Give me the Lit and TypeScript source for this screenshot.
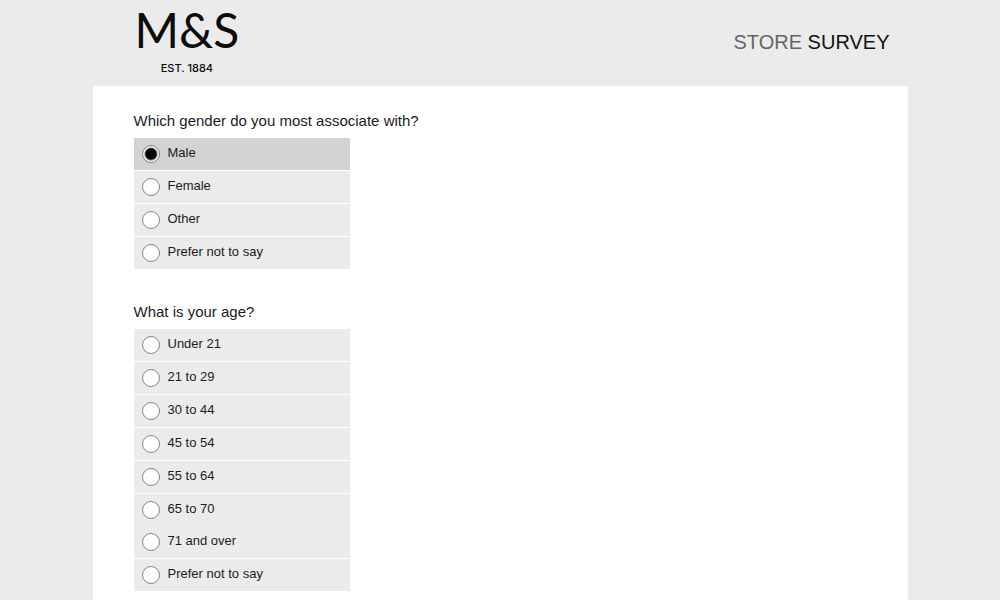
import { LitElement, html, css } from "lit";
import { customElement, property, state } from "lit/decorators.js";
import { classMap } from "lit/directives/class-map.js";

@customElement("survey-question")
class SurveyQuestion extends LitElement {
  @property() name = "";
  @property() heading = "";
  @property({ attribute: false }) options: string[] = [];
  /** Options drawn without a divider above them. */
  @property({ attribute: false }) joined: string[] = [];
  @property() value = "";

  static styles = css`
    :host {
      display: block;
    }
    .question {
      margin: 0;
      padding: 0;
      border: 0;
      min-width: 0;
    }
    .heading {
      padding: 0;
      margin-bottom: 7px;
      font-size: 15px;
      line-height: 20px;
    }
    .options {
      width: 216px;
      max-width: 100%;
    }
    .option {
      display: flex;
      align-items: center;
      gap: 8px;
      height: 30px;
      padding: 0 8px 2px;
      background: #ebebeb;
      font-size: 13px;
      line-height: 16px;
      cursor: pointer;
    }
    .option + .option {
      border-top: 1px solid #fff;
    }
    .option + .joined {
      border-top: 0;
    }
    .selected {
      background: #d3d3d3;
    }
    .radio {
      appearance: none;
      box-sizing: border-box;
      flex: none;
      width: 18px;
      height: 18px;
      margin: 2px 0 0;
      border: 1px solid #858585;
      border-radius: 50%;
      background: #fff;
      cursor: pointer;
    }
    .radio:checked {
      background: radial-gradient(circle, #000 5px, #f4f4f4 7px);
    }
  `;

  private choose(option: string) {
    this.value = option;
  }

  render() {
    return html`
      <fieldset class="question">
        <legend class="heading">${this.heading}</legend>
        <div class="options">
          ${this.options.map(
            (option) => html`
              <label
                class=${classMap({
                  option: true,
                  selected: option === this.value,
                  joined: this.joined.includes(option),
                })}
              >
                <input
                  class="radio"
                  type="radio"
                  name=${this.name}
                  .value=${option}
                  .checked=${option === this.value}
                  @change=${() => this.choose(option)}
                />
                <span class="text">${option}</span>
              </label>
            `
          )}
        </div>
      </fieldset>
    `;
  }
}

@customElement("app-root")
class AppRoot extends LitElement {
  @state() private genders = ["Male", "Female", "Other", "Prefer not to say"];
  @state() private ages = [
    "Under 21",
    "21 to 29",
    "30 to 44",
    "45 to 54",
    "55 to 64",
    "65 to 70",
    "71 and over",
    "Prefer not to say",
  ];

  static styles = css`
    :host {
      display: flex;
      flex-direction: column;
      min-height: 100vh;
      background: #ebebeb;
      color: #1c1c1c;
      font-family: "Liberation Sans", Arial, sans-serif;
    }
    .header,
    .sheet {
      box-sizing: border-box;
      width: 100%;
      max-width: 815px;
      margin: 0 auto;
    }
    .header {
      display: flex;
      justify-content: space-between;
      align-items: center;
      padding: 5px 18px 8px 42px;
    }
    .logo {
      display: flex;
      flex-direction: column;
      align-items: center;
      gap: 3px;
      color: #0c0c0c;
    }
    .mark {
      font-family: Lato, sans-serif;
      font-size: 48px;
      line-height: 50px;
    }
    .since {
      font-family: Inter, sans-serif;
      font-size: 11px;
      font-weight: 500;
      line-height: 20px;
    }
    .title {
      margin: 0;
      font-size: 20px;
      font-weight: 400;
      line-height: 24px;
      color: #111;
    }
    .store {
      color: #666;
    }
    .sheet {
      flex: 1;
      display: flex;
      flex-direction: column;
      gap: 33px;
      padding: 25px 41px 9px;
      background: #fff;
    }
  `;

  render() {
    return html`
      <header class="header">
        <div class="logo">
          <span class="mark">M&amp;S</span>
          <span class="since">EST. 1884</span>
        </div>
        <h1 class="title"><span class="store">STORE</span> SURVEY</h1>
      </header>
      <main class="sheet">
        <survey-question
          name="gender"
          heading="Which gender do you most associate with?"
          value="Male"
          .options=${this.genders}
        ></survey-question>
        <survey-question
          name="age"
          heading="What is your age?"
          .options=${this.ages}
          .joined=${["71 and over"]}
        ></survey-question>
      </main>
    `;
  }
}
